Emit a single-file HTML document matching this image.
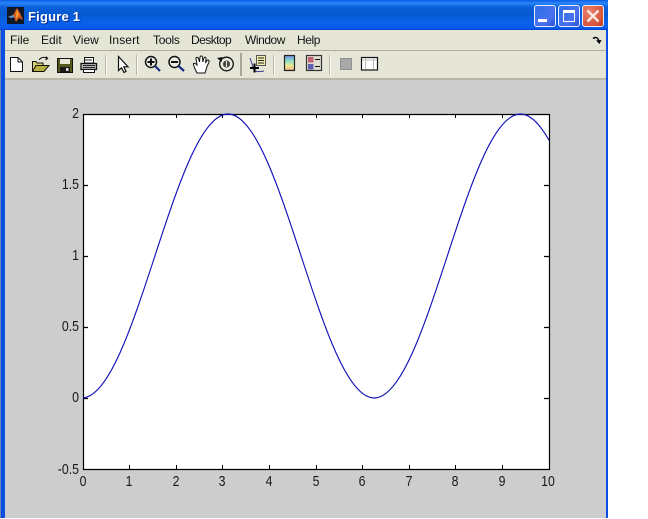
<!DOCTYPE html>
<html><head><meta charset="utf-8"><style>
html,body{margin:0;padding:0;background:#fff}
body{width:648px;height:519px;position:relative;overflow:hidden;font-family:"Liberation Sans",sans-serif}
.a{position:absolute}
.m{position:absolute;top:33px;font-size:12px;color:#111;line-height:14px;white-space:nowrap}
.t{position:absolute;font-size:15px;line-height:16px;color:#1a1a1a}
.yl{text-align:right;width:40px;left:39px;transform:scaleX(.82);transform-origin:right center}
.xl{text-align:center;width:30px;top:474px;transform:scaleX(.82);transform-origin:center}
.b{position:absolute;top:5px;width:22px;height:22px;border:1px solid #e8eeff;border-radius:3px;box-sizing:border-box}
</style></head><body>
<div class="a" style="left:0;top:0;width:608px;height:518px;background:#0a4fe0"></div>
<div class="a" style="left:0;top:30px;width:1px;height:488px;background:#6f86b8"></div>
<div class="a" style="left:0;top:0;width:608px;height:30px;background:linear-gradient(#0a5be8 0,#2a86f5 3px,#0c62dc 7px,#0558d0 14px,#0a62e6 22px,#0a5cf0 28px,#0340c8 30px)"></div>
<svg class="a" style="left:7px;top:7px" width="17" height="17" viewBox="0 0 17 17"><rect width="17" height="17" fill="#10182a"/><path d="M1 10 L6 8 L10 1 L13 6 L16 13 L12 11 L9 15 L7 10Z" fill="#d85a18"/><path d="M1 10 L6 8 L8 10 L4 11Z" fill="#5f9ad0"/><path d="M10 2 L12 8 L9 12 L9 7Z" fill="#f09a30"/></svg>
<div class="a" style="left:28px;top:9px;font-size:13px;font-weight:bold;color:#fff;line-height:15px;text-shadow:1px 1px 0 #0a2f9a;letter-spacing:.2px">Figure 1</div>
<div class="b" style="left:534px;background:radial-gradient(circle at 4px 4px,#2f6fe8,#4a73ee 60%,#2a4fd0)"><div class="a" style="left:3px;top:13px;width:9px;height:3px;background:#fff"></div></div>
<div class="b" style="left:558px;background:radial-gradient(circle at 4px 4px,#2f6fe8,#4a73ee 60%,#2a4fd0)"><div class="a" style="left:4px;top:4px;width:12px;height:12px;border:1px solid #fff;border-top-width:3px;box-sizing:border-box"></div></div>
<div class="b" style="left:582px;background:radial-gradient(circle at 6px 6px,#e8806a,#d8553a 70%,#c0381f)"><svg class="a" style="left:3px;top:3px" width="14" height="14" viewBox="0 0 14 14"><path d="M1.500 1.500L12.500 12.500M12.500 1.500L1.500 12.500" stroke="#fbe8e0" stroke-width="2.400"/></svg></div>

<div class="a" style="left:5px;top:30px;width:601px;height:21px;background:#e5e5d6"></div>
<div class="a" style="left:5px;top:50px;width:601px;height:1px;background:#b0ae9c"></div>
<div class="a" style="left:5px;top:51px;width:601px;height:28px;background:#e6e6d8"></div>
<div class="a" style="left:5px;top:78px;width:601px;height:2px;background:#b9b8a8"></div>
<div class="m" style="left:10px">File</div>
<div class="m" style="left:41px">Edit</div>
<div class="m" style="left:73px">View</div>
<div class="m" style="left:109px;letter-spacing:.1px">Insert</div>
<div class="m" style="left:153px;letter-spacing:-.3px">Tools</div>
<div class="m" style="left:191px;letter-spacing:-.55px">Desktop</div>
<div class="m" style="left:245px;letter-spacing:-.45px">Window</div>
<div class="m" style="left:297px;letter-spacing:-.4px">Help</div>
<svg class="a" style="left:592px;top:36px" width="10" height="9" viewBox="0 0 10 9"><path d="M1 2.500C4 0.500 6 1.500 7 5.500" fill="none" stroke="#000" stroke-width="1.400"/><path d="M4 4.500L7.500 8L9.500 4Z" fill="#000"/></svg>

<svg class="a" style="left:0;top:51px" width="400" height="27" viewBox="0 51 400 27">
<path d="M10.500 57.500H18L22.500 62V71.500H10.500Z" fill="#fff" stroke="#111"/><path d="M18 57.500V62H22.500" fill="none" stroke="#111"/>
<path d="M32.500 71.500V61.500H36L37 63H43V71.500Z" fill="#d8d070" stroke="#111"/><path d="M32.500 71.500L36 65.500H49L44 71.500Z" fill="#b8b040" stroke="#111"/><path d="M39 60C41 57 44 57 47 58" fill="none" stroke="#111"/><path d="M46 56L48.500 58.500L45.500 60.500Z" fill="#111"/>
<rect x="57.500" y="58.500" width="15" height="14" fill="#55591c" stroke="#111"/><rect x="60" y="59" width="10" height="5" fill="#e8e8d8"/><rect x="60" y="67" width="10" height="5" fill="#1a1a1a"/><rect x="66" y="68" width="2.500" height="3" fill="#ddd"/>
<path d="M84.500 57.500H93.500V63H84.500Z" fill="#fff" stroke="#111"/><path d="M81 63.500H96.500V69.500H81Z" fill="#bbb" stroke="#111" stroke-width="1.300"/><path d="M83.500 69.500H94.500V72.500H83.500Z" fill="#fff" stroke="#111"/><path d="M84 60H92M83 65.500H95M83 67.500H95" stroke="#222"/>
<path d="M105.500 55V75" stroke="#b8b6a4"/><path d="M106.500 55V75" stroke="#fafaf2"/>
<path d="M118.500 56.500V70.500L121.500 67.800L124 72.500L126 71.300L123.800 66.800H128Z" fill="#fff" stroke="#111" stroke-width="1.200"/>
<path d="M136.500 55V75" stroke="#b8b6a4"/><path d="M137.500 55V75" stroke="#fafaf2"/>
<circle cx="151" cy="62" r="5.500" fill="#eeeee4" stroke="#111" stroke-width="1.500"/><path d="M147.500 62H154.500M151 58.500V65.500" stroke="#111" stroke-width="2"/><path d="M155 66L160 71" stroke="#1a2a88" stroke-width="2.200"/>
<circle cx="174.500" cy="62" r="5.500" fill="#eeeee4" stroke="#111" stroke-width="1.500"/><path d="M171 62H178" stroke="#111" stroke-width="2"/><path d="M178.500 66L184 71" stroke="#1a2a88" stroke-width="2.200"/>
<path d="M197 73C195 69 193 65 193.500 63.500C194.500 62.500 196 64 197 65L196 58.500C196 57 198 57 198.500 58.500L199.500 62L200 57C200.500 55.500 202 55.500 202.500 57L202.800 62L204 58C204.500 56.500 206 57 206 58.500L205.500 63L207 60.500C208 59.500 209.500 60.500 209 62C207.500 65 206 69 205 73Z" fill="#fff" stroke="#111"/>
<circle cx="226.500" cy="64" r="6.800" fill="none" stroke="#111" stroke-width="1.300"/><circle cx="226.500" cy="64" r="3.500" fill="#444"/><path d="M226.500 61V67" stroke="#eee"/><path d="M217 58L222.500 57L221.500 62Z" fill="#111"/>
<path d="M241 53V76" stroke="#a8a694" stroke-width="2"/>
<path d="M250 58L254 70C256 72 258 72 264 71" fill="none" stroke="#333a90"/><rect x="256.500" y="55.500" width="9" height="10" fill="#f4eeb0" stroke="#555"/><path d="M258 58H264M258 60.500H264M258 63H264" stroke="#222"/><path d="M250 68H259M254.500 63.500V72.500" stroke="#000" stroke-width="2"/>
<path d="M273.500 55V75" stroke="#b8b6a4"/><path d="M274.500 55V75" stroke="#fafaf2"/>
<defs><linearGradient id="g" x1="0" y1="0" x2="0" y2="1"><stop offset="0" stop-color="#6a8ae0"/><stop offset=".35" stop-color="#90e0d0"/><stop offset=".7" stop-color="#f0e890"/><stop offset="1" stop-color="#f0a880"/></linearGradient></defs>
<rect x="284.500" y="55.500" width="10" height="15" fill="url(#g)" stroke="#222" stroke-width="1.200"/>
<rect x="306.500" y="55.500" width="15" height="15" fill="#e0dcd0" stroke="#333" stroke-width="1.200"/><rect x="308" y="57" width="5.500" height="5.500" fill="#c06070"/><rect x="308" y="64" width="5.500" height="5.500" fill="#6060b0"/><path d="M315 59.500H320M315 66.500H320" stroke="#111"/>
<path d="M329.500 55V75" stroke="#b8b6a4"/><path d="M330.500 55V75" stroke="#fafaf2"/>
<rect x="340.500" y="58.500" width="11" height="11" fill="#a8a8a8" stroke="#909090"/>
<rect x="361.500" y="57.500" width="16" height="12.500" fill="#fff" stroke="#111" stroke-width="1.200"/><path d="M365.500 58V69M373.500 58V69M362 60H377" stroke="#bbb"/>
</svg>

<div class="a" style="left:5px;top:80px;width:601px;height:438px;background:#cdcdcd"></div>
<div class="a" style="left:83px;top:114px;width:466px;height:355px;background:#fff"></div>
<svg class="a" style="left:0;top:0" width="648" height="519" viewBox="0 0 648 519">
<defs><clipPath id="c"><rect x="83" y="113" width="466" height="357"/></clipPath></defs>
<path d="M83.500 114.500H549.500V469.500H83.500Z" fill="none" stroke="#000" stroke-width="1.200"/>
<path d="M129.500 114V118M176.500 114V118M222.500 114V118M269.500 114V118M316.500 114V118M362.500 114V118M409.500 114V118M455.500 114V118M502.500 114V118M129.500 469V465M176.500 469V465M222.500 469V465M269.500 469V465M316.500 469V465M362.500 469V465M409.500 469V465M455.500 469V465M502.500 469V465" stroke="#000"/>
<path d="M83 185.500H88M83 256.500H88M83 327.500H88M83 398.500H88M549 185.500H544M549 256.500H544M549 327.500H544M549 398.500H544" stroke="#000" stroke-width="1.200"/>
<path clip-path="url(#c)" fill="none" stroke="#1010b8" stroke-width="1.150" d="M81.800 398C135 398 174.800 114 228 114C281.200 114 321 398 374.200 398C427.400 398 467.200 114 520.400 114C573.600 114 613.400 398 666.600 398"/>
</svg>
<div class="t yl" style="top:106px">2</div>
<div class="t yl" style="top:177px">1.5</div>
<div class="t yl" style="top:248px">1</div>
<div class="t yl" style="top:319px">0.5</div>
<div class="t yl" style="top:390px">0</div>
<div class="t yl" style="top:462px">-0.5</div>
<div class="t xl" style="left:68px">0</div>
<div class="t xl" style="left:114px">1</div>
<div class="t xl" style="left:161px">2</div>
<div class="t xl" style="left:207px">3</div>
<div class="t xl" style="left:254px">4</div>
<div class="t xl" style="left:301px">5</div>
<div class="t xl" style="left:347px">6</div>
<div class="t xl" style="left:394px">7</div>
<div class="t xl" style="left:440px">8</div>
<div class="t xl" style="left:487px">9</div>
<div class="t xl" style="left:533px">10</div>
</body></html>
